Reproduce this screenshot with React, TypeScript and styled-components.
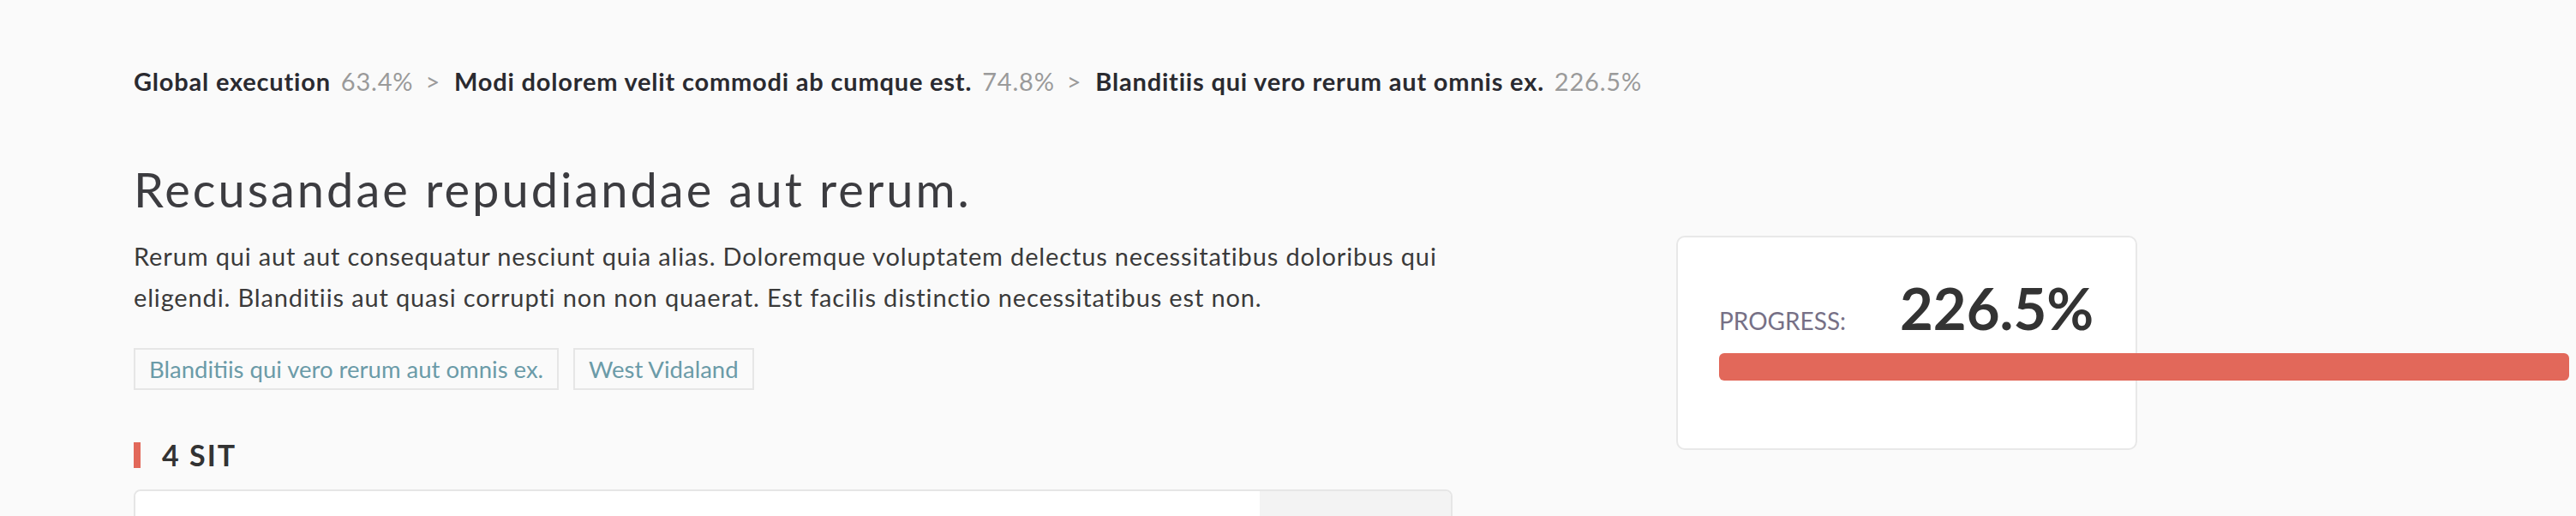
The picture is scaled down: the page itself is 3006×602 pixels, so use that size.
import styled, { createGlobalStyle } from 'styled-components';

const GlobalStyle = createGlobalStyle`
    html, body {
        margin: 0;
        padding: 0;
        background: #fafafa;
        font-family: Lato, 'Noto Sans', sans-serif;
        color: #3a3a3a;
    }
`;

const crumbs = [
    { name: 'Global execution', pct: '63.4%' },
    { name: 'Modi dolorem velit commodi ab cumque est.', pct: '74.8%' },
    { name: 'Blanditiis qui vero rerum aut omnis ex.', pct: '226.5%' },
];

const tags = ['Blanditiis qui vero rerum aut omnis ex.', 'West Vidaland'];

const progress = 226.5;

const App = () => {
    return (
        <>
            <GlobalStyle />
            <Page>
                <Breadcrumb>
                    {crumbs.map((c, i) => (
                        <Crumb key={c.name}>
                            {i > 0 && <Sep>&gt;</Sep>}
                            <CrumbName>{c.name}</CrumbName>
                            <CrumbPct>{c.pct}</CrumbPct>
                        </Crumb>
                    ))}
                </Breadcrumb>
                <Content>
                    <Main>
                        <Title>Recusandae repudiandae aut rerum.</Title>
                        <Description>
                            Rerum qui aut aut consequatur nesciunt quia alias. Doloremque voluptatem delectus
                            necessitatibus doloribus qui eligendi. Blanditiis aut quasi corrupti non non quaerat. Est
                            facilis distinctio necessitatibus est non.
                        </Description>
                        <Tags>
                            {tags.map((t) => (
                                <Tag key={t}>{t}</Tag>
                            ))}
                        </Tags>
                        <SectionTitle>4 SIT</SectionTitle>
                        <Table>
                            <TableMain />
                            <TableAside />
                        </Table>
                    </Main>
                    <Side>
                        <ProgressCard>
                            <ProgressRow>
                                <ProgressLabel>Progress:</ProgressLabel>
                                <ProgressValue>{progress}%</ProgressValue>
                            </ProgressRow>
                            <Bar style={{ width: `${progress}%` }} />
                        </ProgressCard>
                    </Side>
                </Content>
            </Page>
        </>
    );
};

const Page = styled.div`
    padding: 75px 0 0 156px;
    height: 602px;
    box-sizing: border-box;
    overflow: hidden;
`;

// breadcrumb
const Breadcrumb = styled.div`
    display: flex;
    align-items: baseline;
    font-size: 29px;
    line-height: 40px;
    letter-spacing: 0.8px;
`;

const Crumb = styled.div`
    display: flex;
    align-items: baseline;
`;

const Sep = styled.span`
    color: #9a9a9a;
    margin: 0 16px 0 14px;
`;

const CrumbName = styled.span`
    font-weight: 700;
    color: #2a2a30;
`;

const CrumbPct = styled.span`
    color: #9a9a9a;
    margin-left: 12px;
`;

// content
const Content = styled.div`
    display: flex;
    align-items: flex-start;
    margin-top: 70px;
`;

const Main = styled.div`
    width: 1539px;
    flex-shrink: 0;
`;

const Title = styled.h1`
    margin: 0;
    font-size: 56px;
    line-height: 72px;
    font-weight: 400;
    letter-spacing: 3px;
    color: #3c3c40;
`;

const Description = styled.p`
    margin: 18px 0 0;
    font-size: 29px;
    line-height: 48px;
    letter-spacing: 0.85px;
    color: #3a3a3a;
`;

const Tags = styled.div`
    display: flex;
    gap: 17px;
    margin-top: 35px;
`;

const Tag = styled.div`
    border: 2px solid #e6e6e6;
    padding: 0 16px;
    font-size: 27.5px;
    line-height: 45px;
    color: #6b9ba8;
`;

const SectionTitle = styled.h2`
    display: flex;
    align-items: center;
    gap: 25px;
    margin: 61px 0 0;
    font-size: 34px;
    line-height: 30px;
    font-weight: 700;
    letter-spacing: 2px;
    color: #333;

    &::before {
        content: '';
        width: 8px;
        height: 30px;
        background: #e2685a;
    }
`;

const Table = styled.div`
    display: flex;
    margin-top: 25px;
    height: 300px;
    border: 2px solid #e6e6e6;
    border-radius: 8px;
    overflow: hidden;
`;

const TableMain = styled.div`
    flex: 1;
    background: #fff;
`;

const TableAside = styled.div`
    width: 223px;
    background: #f3f3f3;
`;

// progress card
const Side = styled.div`
    margin: 90px 0 0 261px;
`;

const ProgressCard = styled.div`
    width: 538px;
    box-sizing: border-box;
    padding: 42px 48px 79px;
    background: #fff;
    border: 2px solid #e8e8e8;
    border-radius: 10px;
`;

const ProgressRow = styled.div`
    display: flex;
    align-items: baseline;
`;

const ProgressLabel = styled.span`
    width: 211px;
    font-size: 28px;
    text-transform: uppercase;
    color: #767086;
`;

const ProgressValue = styled.span`
    font-size: 67px;
    line-height: 80px;
    font-weight: 700;
    color: #333;
`;

const Bar = styled.div`
    height: 32px;
    margin-top: 13px;
    border-radius: 6px;
    background: #e2685a;
`;

export default App;
